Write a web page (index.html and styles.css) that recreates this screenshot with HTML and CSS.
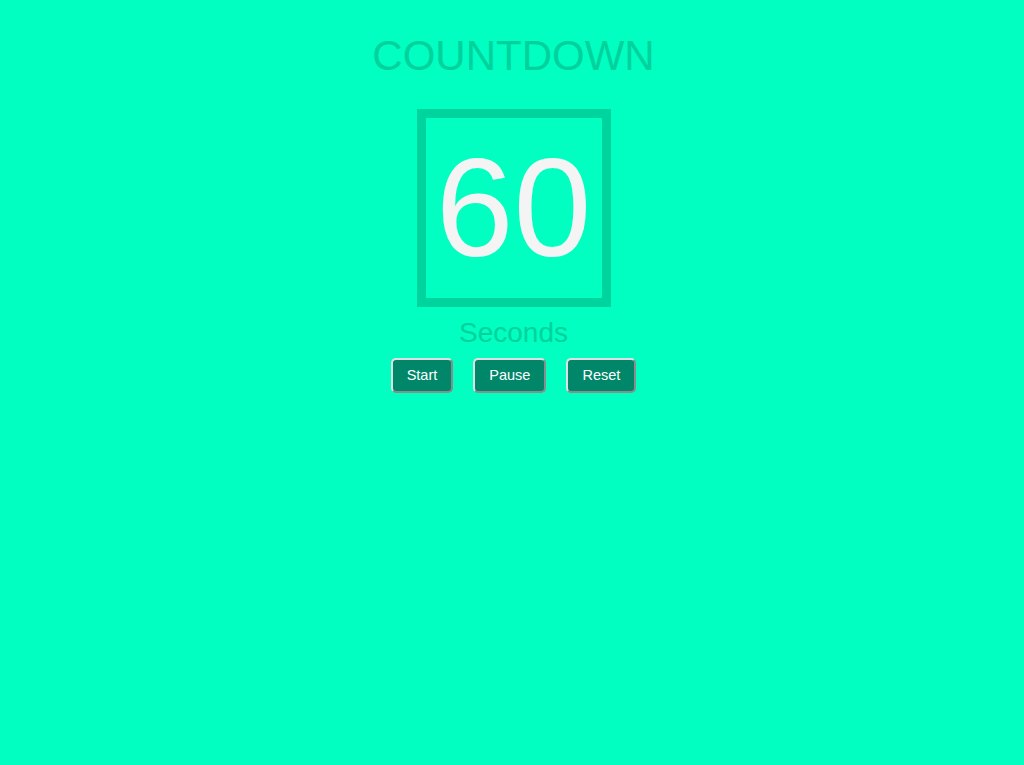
FILE: index.html
```html
<!DOCTYPE html>
<html>
<head>
<meta charset="utf-8">
<link rel="stylesheet" href="styles.css">
</head>
<body>
<main class="app">
  <h1 class="title">COUNTDOWN</h1>
  <div class="timer"><span class="count">60</span></div>
  <div class="unit">Seconds</div>
  <div class="controls">
    <button class="btn">Start</button>
    <button class="btn">Pause</button>
    <button class="btn">Reset</button>
  </div>
</main>
</body>
</html>
```
FILE: styles.css
```css
html, body {
  margin: 0;
  padding: 0;
  background: #00ffc0;
  height: 100%;
}
body {
  font-family: "Liberation Sans", Arial, sans-serif;
}
.app {
  display: flex;
  flex-direction: column;
  align-items: center;
  padding-top: 30px;
  padding-left: 3px;
}
.title {
  margin: 0;
  font-size: 42px;
  font-weight: normal;
  color: #00d29e;
  line-height: 52px;
}
.timer {
  margin-top: 27px;
  width: 176px;
  height: 180px;
  border: 9px solid #00d49e;
  display: flex;
  align-items: center;
  justify-content: center;
}
.count {
  font-size: 140px;
  color: #f4f4f4;
  line-height: 1;
}
.unit {
  margin-top: 9px;
  font-size: 28px;
  color: #00d29e;
  line-height: 34px;
}
.controls {
  margin-top: 8px;
  display: flex;
  gap: 20px;
}
.btn {
  font-family: "Liberation Sans", Arial, sans-serif;
  font-size: 14.5px;
  color: #ffffff;
  background: #00876a;
  border: 2px outset #e0e0e0;
  border-radius: 5px;
  padding: 8px 14px;
  line-height: 15px;
}
```
